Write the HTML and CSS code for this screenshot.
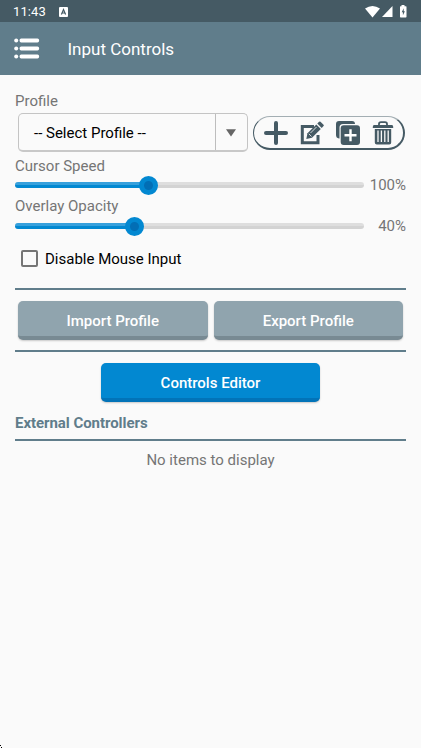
FILE: index.html
```html
<!DOCTYPE html>
<html lang="en">
<head>
<meta charset="utf-8">
<title>Input Controls</title>
<link rel="stylesheet" href="styles.css">
</head>
<body>
<div class="screen">
  <div class="status">
    <span class="clock">11:43</span>
    <svg class="badge" width="9" height="10" viewBox="0 0 9 10"><rect width="9" height="10" rx="1" fill="#fff"/><path d="M2.4 7.6 4.5 2.5 6.6 7.6M3.3 6h2.4" fill="none" stroke="#455a64" stroke-width="1.2"/></svg>
    <svg class="signals" width="44" height="14" viewBox="0 0 44 14" fill="#fff"><path d="M0 3.5Q7.5-1.5 15 3.5L7.5 12.5Z"/><path d="M27.5 1v11H17Z"/><path d="M36.5 1.2V0h3v1.2h1.4q.6 0 .6.6v10q0 .7-.7.7h-5.1q-.7 0-.7-.7v-10q0-.6.6-.6Z"/><path d="m38.7 3.3-2 4h1.2v3l2-4h-1.2Z" fill="#455a64"/></svg>
  </div>
  <header class="appbar">
    <svg width="26" height="21" viewBox="0 0 26 21" fill="#fff"><circle cx="2.2" cy="2.4" r="2"/><circle cx="2.2" cy="10.4" r="2"/><circle cx="2.2" cy="18.4" r="2"/><rect x="5.6" y=".4" width="19.5" height="4" rx="1.6"/><rect x="5.6" y="8.4" width="19.5" height="4" rx="1.6"/><rect x="5.6" y="16.4" width="19.5" height="4" rx="1.6"/></svg>
    <h1>Input Controls</h1>
  </header>
  <main>
    <div class="label">Profile</div>
    <div class="profile">
      <div class="select"><span>-- Select Profile --</span><i><svg width="10" height="8" viewBox="0 0 10 8"><path d="M0 .3h10L5 7.6Z" fill="#666"/></svg></i></div>
      <div class="tools">
        <svg width="24" height="24" viewBox="0 0 24 24"><path d="M12 2v20M2 12h20" stroke="#455a64" stroke-width="4" stroke-linecap="round"/></svg>
        <svg width="24" height="24" viewBox="0 0 24 24"><path d="M14 5.5H2.3v16.2H18V14" fill="none" stroke="#455a64" stroke-width="3"/><path d="m6.3 18 1.2-5.7 8.8-8.8 4.5 4.5-8.8 8.8Z" fill="#455a64"/><path d="m17.3 2.5 1.8-1.8q.7-.6 1.4 0l3 3q.6.7 0 1.4l-1.8 1.8Z" fill="#455a64"/><path d="m8.8 12.8 2.7 2.7M10.5 12l6-6" stroke="#fafafa" stroke-width=".8"/></svg>
        <svg width="24" height="24" viewBox="0 0 24 24"><path d="M3 17.5Q0 17 0 14V3q0-3 3-3h13q3 0 3 3H7Q3.5 3 3.5 6.5v11Z" fill="#455a64"/><rect x="4.7" y="4.3" width="19.3" height="19.7" rx="3" fill="#455a64"/><path d="M14.5 8.2v12M8.5 14.2h12" stroke="#fff" stroke-width="2.4"/></svg>
        <svg width="22" height="24" viewBox="0 0 22 24"><path d="M7 4.5V3q0-1.8 2-1.8h4Q15 1.2 15 3v1.5" fill="none" stroke="#455a64" stroke-width="1.8"/><path d="M1.8 4h18.4q1 .3 1 2v1H.8V6q0-1.7 1-2Z" fill="#455a64"/><path d="M2.8 8h16.4v13.5q0 2-2 2H4.8q-2 0-2-2Z" fill="#455a64"/><path d="M6 9.5v11.5M9.4 9.5v11.5M12.8 9.5v11.5M16.2 9.5v11.5" stroke="#fafafa" stroke-width="1.3"/></svg>
      </div>
    </div>
    <div class="label cursor">Cursor Speed</div>
    <div class="sliderrow"><div class="track"><div class="fill" style="width:133px"></div></div><span>100%</span></div>
    <div class="label opacity">Overlay Opacity</div>
    <div class="sliderrow"><div class="track"><div class="fill" style="width:119.5px"></div></div><span>40%</span></div>
    <div class="check"><i></i><span>Disable Mouse Input</span></div>
    <div class="buttons"><div class="btn">Import Profile</div><div class="btn">Export Profile</div></div>
    <div class="btn editor">Controls Editor</div>
    <h2>External Controllers</h2>
    <div class="empty">No items to display</div>
  </main>
  <svg class="speck" width="3" height="4" viewBox="0 0 3 4"><path d="M0 1h1v1H0ZM1 3h1v1H1Z"/></svg>
</div>
</body>
</html>
```
FILE: styles.css
```css
*, *::after { box-sizing: border-box; }
body { margin: 0; background: #fafafa; font-family: Roboto, sans-serif; }
.screen { position: relative; width: 421px; height: 748px; overflow: hidden; font-size: 15px; }
.status { height: 22px; background: #455a64; color: #fff; display: flex; align-items: center; padding: 1px 12px 0 13px; }
.clock { width: 33px; font-size: 13px; font-weight: 400; letter-spacing: .1px; line-height: 20px; }
.badge { margin-left: 12.5px; }
.signals { margin-left: auto; }
.appbar { height: 53px; background: #607d8b; color: #fff; display: flex; align-items: center; padding-left: 14px; gap: 27.5px; }
h1 { margin: 0; font-size: 17px; font-weight: 400; line-height: 22px; }
main { padding: 16px 15px 0; }
.label { height: 20px; line-height: 20px; color: #757575; }
.profile { margin: 2px 1px 0 3px; height: 39px; display: flex; align-items: center; }
.select { width: 229.5px; height: 39px; border: 1px solid #c4c4c4; border-bottom: 2px solid #c8c8c8; border-radius: 5px; display: flex; color: #000; }
.select span { flex: 1; padding-left: 15px; line-height: 38px; }
.select i { width: 32px; border-left: 1px solid #bdbdbd; display: flex; align-items: center; justify-content: center; padding-top: 1px; }
.tools { margin-left: 5.5px; width: 152px; height: 34px; border: 1px solid #455a64; border-width: 1px 2px 2px 1px; border-top-color: #a3aeb3; border-radius: 17px; display: flex; align-items: center; justify-content: space-between; padding: 1px 9px 0 10px; }
.cursor { margin-top: 4px; }
.opacity { margin-top: 2px; }
.sliderrow { height: 18px; display: flex; align-items: center; justify-content: space-between; color: #757575; }
.opacity + .sliderrow { margin-top: 1px; }
.track { width: 349px; height: 6px; border-radius: 3px; background: linear-gradient(#dedede 50%, #d3d3d3 50%); }
.fill { position: relative; height: 6px; border-radius: 3px; background: linear-gradient(#36a0dc 50%, #0288d1 50%); }
.fill::after { content: ""; position: absolute; right: -9.5px; top: -6.5px; width: 19px; height: 19px; border-radius: 50%; border: 5px solid #0288d1; background: #026eb5; }
.check { margin-top: 13px; height: 22px; display: flex; align-items: center; gap: 7px; padding-left: 6px; color: #000; }
.check i { width: 17px; height: 17px; border: 2px solid #757575; border-radius: 2px; margin-top: -1px; }
.buttons { margin-top: 18px; height: 64px; border: solid #607d8b; border-width: 2px 0; display: flex; gap: 6px; padding: 11px 3px 0; }
.btn { flex: 1; height: 39px; border-radius: 5px; background: #90a4ae; border-bottom: 4px solid #788a93; color: #fff; text-align: center; font-weight: 500; line-height: 41px; box-shadow: 0 1px 2px rgba(0,0,0,.2); }
.editor { width: 219px; margin: 10.5px auto 0 86px; background: #0288d1; border-bottom-color: #0273b8; }
h2 { margin: 11.5px 0 0; height: 28px; border-bottom: 2px solid #607d8b; color: #607d8b; font-size: 15px; font-weight: 700; line-height: 20px; letter-spacing: -.05px; }
.empty { margin-top: 9px; text-align: center; line-height: 20px; color: #757575; }
.speck { position: absolute; left: 0; bottom: 0; }
```
